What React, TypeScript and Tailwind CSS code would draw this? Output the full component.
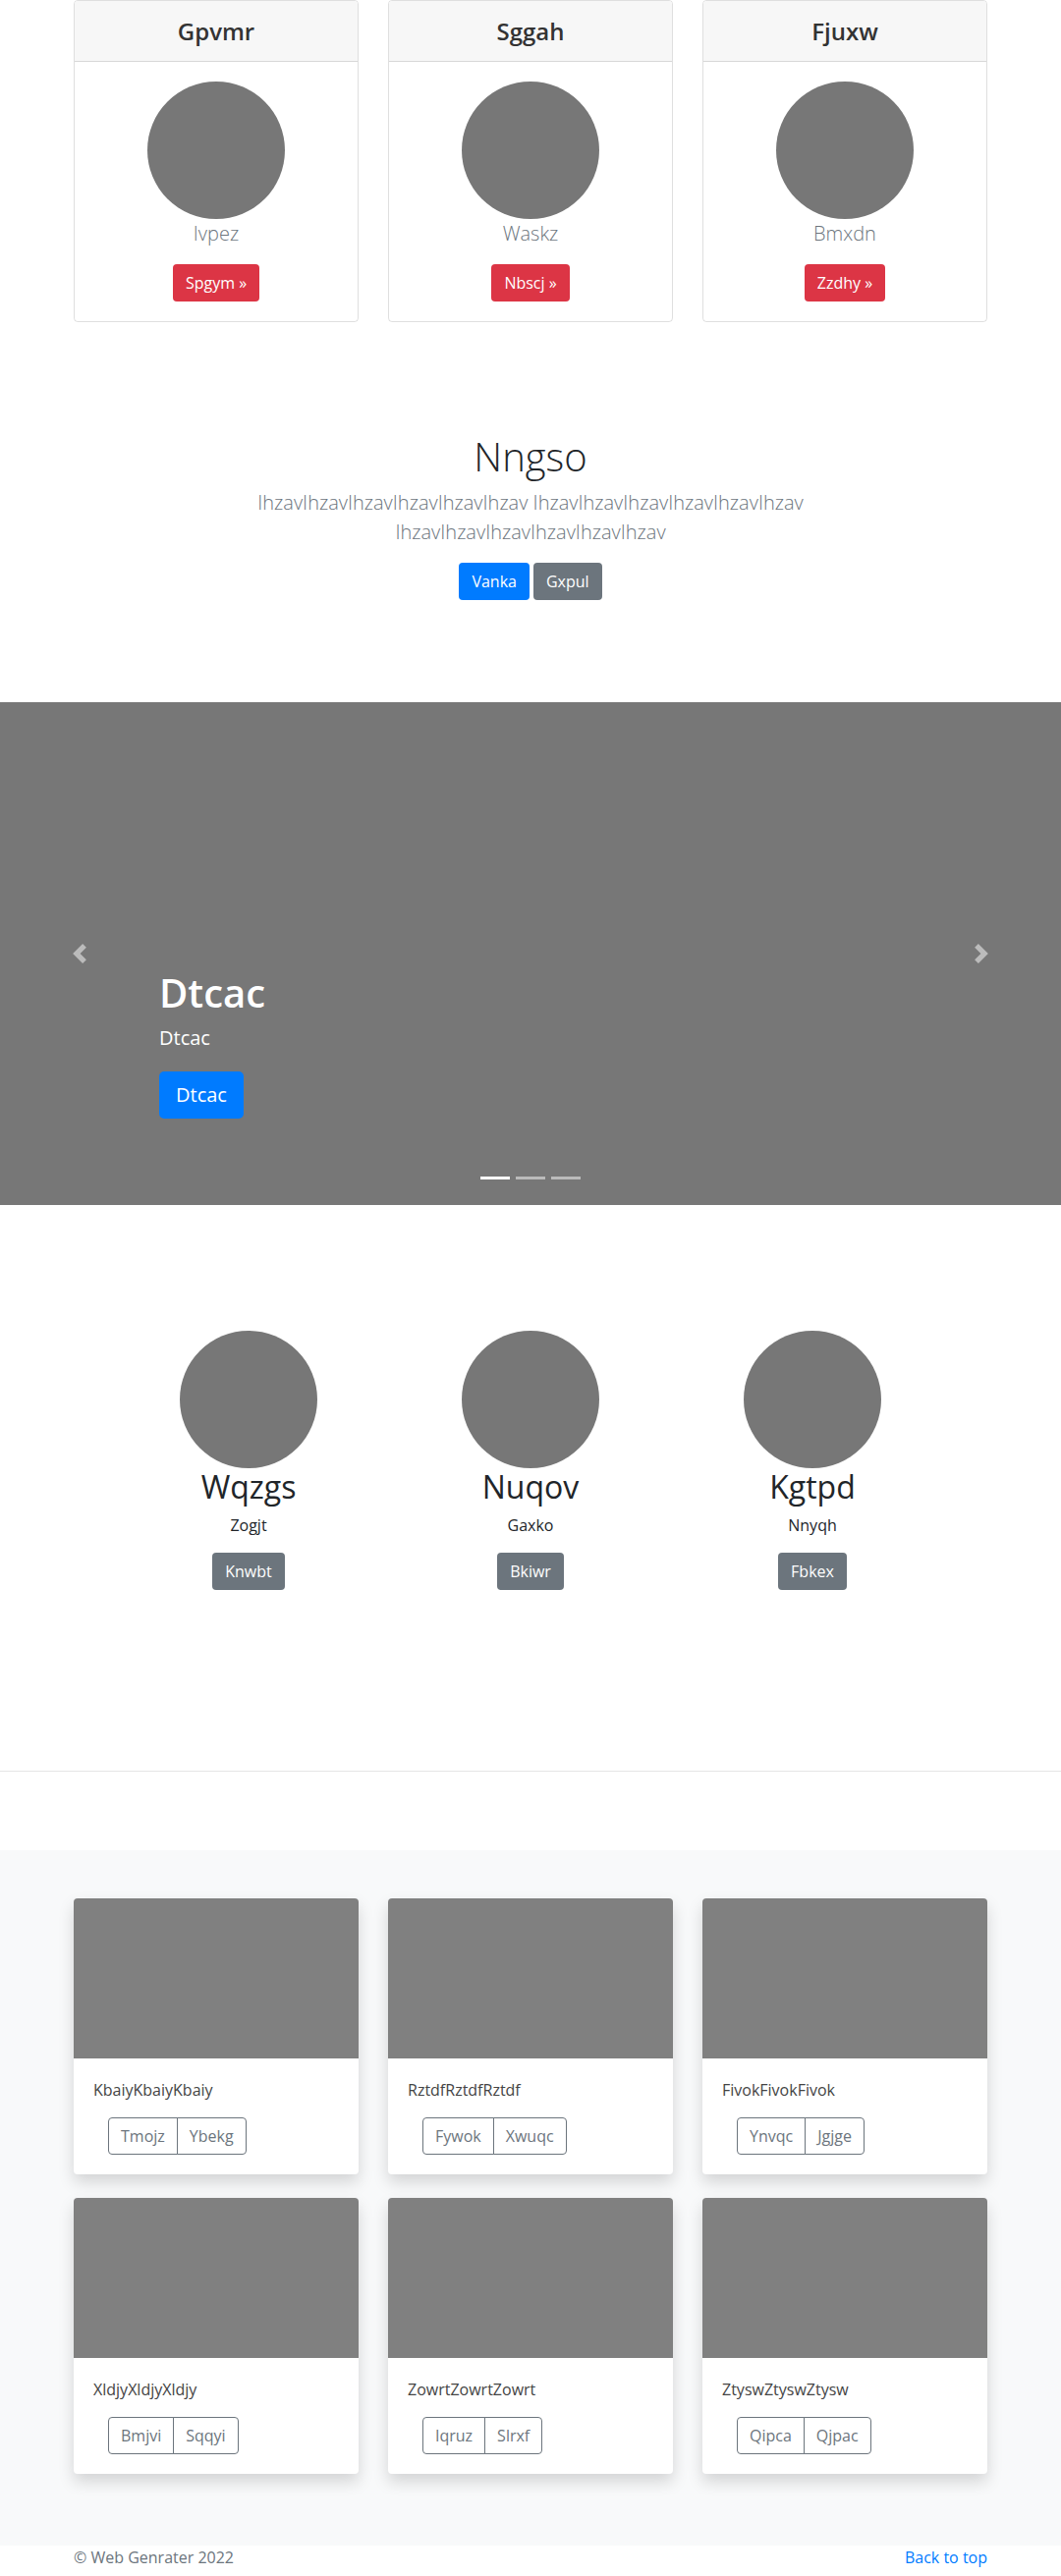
import React from "react";

const font = { fontFamily: '"Open Sans", "Noto Sans", Arial, sans-serif' };

function Btn({ children, color }: { children: React.ReactNode; color: string }) {
  return (
    <span
      className={`inline-block ${color} text-white text-[16px] leading-6 px-3 py-1.5 border border-transparent rounded-[4px]`}
    >
      {children}
    </span>
  );
}

const pricing = [
  { h: "Gpvmr", t: "Ivpez", b: "Spgym »" },
  { h: "Sggah", t: "Waskz", b: "Nbscj »" },
  { h: "Fjuxw", t: "Bmxdn", b: "Zzdhy »" },
];

const marketing = [
  { h: "Wqzgs", t: "Zogjt", b: "Knwbt" },
  { h: "Nuqov", t: "Gaxko", b: "Bkiwr" },
  { h: "Kgtpd", t: "Nnyqh", b: "Fbkex" },
];

const album = [
  { t: "KbaiyKbaiyKbaiy", a: "Tmojz", b: "Ybekg" },
  { t: "RztdfRztdfRztdf", a: "Fywok", b: "Xwuqc" },
  { t: "FivokFivokFivok", a: "Ynvqc", b: "Jgjge" },
  { t: "XldjyXldjyXldjy", a: "Bmjvi", b: "Sqqyi" },
  { t: "ZowrtZowrtZowrt", a: "Iqruz", b: "Slrxf" },
  { t: "ZtyswZtyswZtysw", a: "Qipca", b: "Qjpac" },
];

export default function App() {
  return (
    <div style={font} className="w-[1080px] bg-white text-[#212529] text-[16px] leading-6">
      {/* Pricing cards */}
      <div className="w-[960px] mx-auto px-[15px]">
        <div className="grid grid-cols-3 gap-[30px]">
          {pricing.map((c) => (
            <div key={c.h} className="border border-black/[.125] rounded-[4px] overflow-hidden text-center">
              <div className="h-[62px] bg-[#f7f7f7] border-b border-black/[.125] flex items-center justify-center">
                <h4 className="text-[24px] leading-[29px] font-semibold text-[#333]">{c.h}</h4>
              </div>
              <div className="p-5">
                <div className="w-[140px] h-[140px] rounded-full bg-[#777] mx-auto" />
                <p className="text-[20px] leading-[30px] font-light text-[#6c757d] mb-4">{c.t}</p>
                <Btn color="bg-[#dc3545]">{c.b}</Btn>
              </div>
            </div>
          ))}
        </div>
      </div>

      {/* Jumbotron */}
      <div className="pt-[113px] text-center">
        <div className="w-[640px] mx-auto px-[15px]">
          <h1 className="text-[40px] leading-[48px] font-light mb-2">Nngso</h1>
          <p className="text-[20px] leading-[30px] font-light text-[#6c757d] mb-4">
            IhzavIhzavIhzavIhzavIhzavIhzav IhzavIhzavIhzavIhzavIhzavIhzav IhzavIhzavIhzavIhzavIhzavIhzav
          </p>
          <div className="mt-[7px] flex justify-center gap-1">
            <Btn color="bg-[#007bff]">Vanka</Btn>
            <Btn color="bg-[#6c757d]">Gxpul</Btn>
          </div>
        </div>
      </div>

      {/* Carousel */}
      <div className="relative mt-[104px] h-[512px] bg-[#777]">
        <div className="absolute left-0 top-0 bottom-0 w-[162px] flex items-center justify-center opacity-50">
          <svg width="20" height="20" viewBox="0 0 8 8" fill="#fff">
            <path d="M5.25 0l-4 4 4 4 1.5-1.5-2.5-2.5 2.5-2.5-1.5-1.5z" />
          </svg>
        </div>
        <div className="absolute right-0 top-0 bottom-0 w-[162px] flex items-center justify-center opacity-50">
          <svg width="20" height="20" viewBox="0 0 8 8" fill="#fff">
            <path d="M2.75 0l-1.5 1.5 2.5 2.5-2.5 2.5 1.5 1.5 4-4-4-4z" />
          </svg>
        </div>
        <div className="absolute left-[162px] right-[162px] bottom-[48px] py-5 text-white text-left">
          <h1 className="text-[40px] leading-[48px] font-semibold mb-2">Dtcac</h1>
          <p className="text-[20px] leading-[28px] mb-5">Dtcac</p>
          <div className="mb-5">
            <span className="inline-block bg-[#007bff] text-white text-[20px] leading-[30px] px-4 py-2 border border-transparent rounded-[5px]">
              Dtcac
            </span>
          </div>
        </div>
        <div className="absolute left-0 right-0 bottom-[26px] flex justify-center gap-[6px]">
          <span className="w-[30px] h-[3px] bg-white" />
          <span className="w-[30px] h-[3px] bg-white/50" />
          <span className="w-[30px] h-[3px] bg-white/50" />
        </div>
      </div>

      {/* Marketing */}
      <div className="mt-[128px] w-[861px] mx-auto grid grid-cols-3 text-center">
        {marketing.map((m) => (
          <div key={m.h}>
            <div className="w-[140px] h-[140px] rounded-full bg-[#777] mx-auto" />
            <h2 className="text-[32px] leading-[38px] font-normal mb-2">{m.h}</h2>
            <p className="mb-4">{m.t}</p>
            <Btn color="bg-[#6c757d]">{m.b}</Btn>
          </div>
        ))}
      </div>

      <hr className="mt-[184px] border-0 border-t border-black/10" />

      {/* Album */}
      <div className="mt-[80px] bg-[#f8f9fa] pt-[49px] pb-[73px]">
        <div className="w-[960px] mx-auto px-[15px] grid grid-cols-3 gap-x-[30px] gap-y-6">
          {album.map((a) => (
            <div key={a.t} className="bg-white rounded-[4px] overflow-hidden shadow-[0_8px_16px_rgba(0,0,0,0.15)]">
              <div className="h-[163px] bg-[#808080]" />
              <div className="p-5">
                <p className="mb-4 text-[#444]">{a.t}</p>
                <div className="ml-[15px] inline-flex">
                  <span className="px-3 py-1.5 border border-[#6c757d] text-[#6c757d] rounded-l-[4px]">{a.a}</span>
                  <span className="-ml-px px-3 py-1.5 border border-[#6c757d] text-[#6c757d] rounded-r-[4px]">{a.b}</span>
                </div>
              </div>
            </div>
          ))}
        </div>
      </div>

      {/* Footer */}
      <div className="w-[960px] mx-auto px-[15px] flex justify-between text-[#6c757d]">
        <p>© Web Genrater 2022</p>
        <p className="text-[#007bff]">Back to top</p>
      </div>
    </div>
  );
}
